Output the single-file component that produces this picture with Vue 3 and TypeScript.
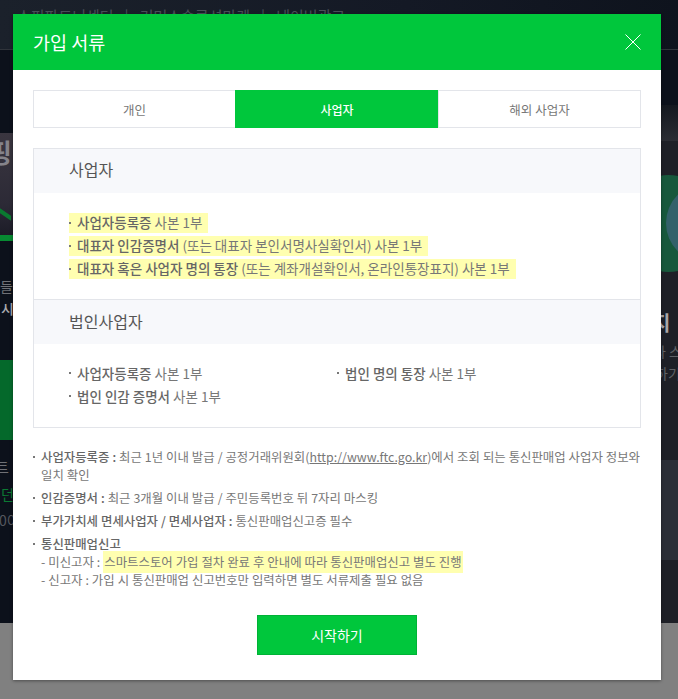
<script setup lang="ts">
const tabs = ['개인', '사업자', '해외 사업자']
const activeTab = 1
const bizDocs = [
  { strong: '사업자등록증', rest: ' 사본 1부' },
  { strong: '대표자 인감증명서', rest: ' (또는 대표자 본인서명사실확인서) 사본 1부' },
  { strong: '대표자 혹은 사업자 명의 통장', rest: ' (또는 계좌개설확인서, 온라인통장표지) 사본 1부' }
]
const corpDocs = [
  { strong: '사업자등록증', rest: ' 사본 1부' },
  { strong: '법인 명의 통장', rest: ' 사본 1부' },
  { strong: '법인 인감 증명서', rest: ' 사본 1부' }
]
</script>

<template>
  <div class="page">
    <div class="backdrop" aria-hidden="true">
      <div class="bg-top">
        <span>쇼핑파트너센터</span><i>|</i><span>커머스솔루션마켓</span><i>|</i><span>네이버광고</span>
      </div>
      <div class="bg-left-hero"></div>
      <span class="bg-txt big">핑</span>
      <div class="bg-tri"></div>
      <div class="bg-gbar"></div>
      <span class="bg-txt l1">밍들</span>
      <span class="bg-txt l2">시</span>
      <div class="bg-gblock"></div>
      <span class="bg-txt l3">트</span>
      <span class="bg-txt l4">던</span>
      <span class="bg-txt l5">0이</span>
      <div class="bg-right-a"></div>
      <div class="bg-right-b"></div>
      <div class="bg-circle c1"></div>
      <div class="bg-circle c2"></div>
      <span class="bg-txt r1">지</span>
      <span class="bg-txt r2">라 스</span>
      <span class="bg-txt r3">하기</span>
      <div class="bg-right-c"></div>
      <div class="bg-grey"></div>
    </div>

    <section class="modal">
      <header class="head">
        <h2>가입 서류</h2>
        <svg class="close" width="16" height="16" viewBox="0 0 16 16" fill="none" stroke="#fff" stroke-width="1">
          <path d="M0.5 0.5 15.5 15.5M15.5 0.5 0.5 15.5" />
        </svg>
      </header>

      <div class="body">
        <nav class="tabs">
          <a v-for="(t, i) in tabs" :key="t" class="tab" :class="{ on: i === activeTab }">{{ t }}</a>
        </nav>

        <div class="box">
          <h3 class="band">사업자</h3>
          <div class="docs first">
            <div v-for="d in bizDocs" :key="d.strong" class="doc-row">
              <span class="doc mark"><b>{{ d.strong }}</b>{{ d.rest }}</span>
            </div>
          </div>
          <h3 class="band ruled">법인사업자</h3>
          <div class="docs grid">
            <span v-for="d in corpDocs" :key="d.strong" class="doc"><b>{{ d.strong }}</b>{{ d.rest }}</span>
          </div>
        </div>

        <ul class="notes">
          <li>
            <span class="one-line"><b>사업자등록증 :</b> 최근 1년 이내 발급 / 공정거래위원회(<u>http://www.ftc.go.kr</u>)에서 조회 되는 통신판매업 사업자 정보와</span><br />일치 확인
          </li>
          <li><b>인감증명서 :</b> 최근 3개월 이내 발급 / 주민등록번호 뒤 7자리 마스킹</li>
          <li><b>부가가치세 면세사업자 / 면세사업자 :</b> 통신판매업신고증 필수</li>
          <li>
            <b>통신판매업신고</b><br />
            - 미신고자 : <span class="mark-note">스마트스토어 가입 절차 완료 후 안내에 따라 통신판매업신고 별도 진행</span><br />
            - 신고자 : 가입 시 통신판매업 신고번호만 입력하면 별도 서류제출 필요 없음
          </li>
        </ul>

        <div class="actions">
          <button class="start" type="button">시작하기</button>
        </div>
      </div>
    </section>
  </div>
</template>

<style>
html,
body {
  margin: 0;
  background: #808080;
}
</style>

<style scoped>
.page {
  position: relative;
  width: 678px;
  height: 699px;
  overflow: hidden;
  font-family: "Noto Sans CJK KR", "Noto Sans", sans-serif;
}
.backdrop {
  position: absolute;
  inset: 0;
  background: #0c111b;
  overflow: hidden;
}
.bg-top {
  position: absolute;
  left: 0;
  right: 0;
  top: 0;
  height: 50px;
  box-sizing: border-box;
  padding: 4px 0 0 17px;
  background: linear-gradient(90deg, #1b212b, #141925 60%, #0e131d);
  border-bottom: 1px solid #30343b;
  color: #4a4f58;
  font-size: 15px;
  line-height: 24px;
  white-space: nowrap;
}
.bg-top i {
  font-style: normal;
  margin: 0 11px;
}
.bg-left-hero {
  position: absolute;
  left: 0;
  top: 133px;
  width: 13px;
  height: 102px;
  background: linear-gradient(180deg, #3a3640, #2c2a36 70%, #1c1c27);
}
.bg-tri {
  position: absolute;
  left: 0;
  top: 212px;
  width: 11px;
  height: 5px;
  background: #0a7a30;
  transform: skewY(35deg);
}
.bg-gbar {
  position: absolute;
  left: 0;
  top: 235px;
  width: 13px;
  height: 6px;
  background: #078a32;
}
.bg-gblock {
  position: absolute;
  left: 0;
  top: 360px;
  width: 13px;
  height: 80px;
  background: #04692b;
}
.bg-txt {
  position: absolute;
  color: #6f7176;
  font-size: 14px;
  line-height: 18px;
  white-space: nowrap;
}
.big {
  left: -12px;
  top: 136px;
  font-size: 26px;
  line-height: 32px;
  font-weight: 700;
  color: #85838a;
}
.l1 { left: -13px; top: 277px; }
.l2 { left: 1px; top: 299px; color: #a9abaf; font-weight: 500; }
.l3 { left: -4px; top: 458px; }
.l4 { left: 1px; top: 485px; color: #0b7a33; }
.l5 { left: -1px; top: 511px; color: #55585f; }
.bg-right-a {
  position: absolute;
  left: 661px;
  top: 105px;
  width: 17px;
  height: 36px;
  background: linear-gradient(180deg, #14181f, #2b2d34);
}
.bg-right-b {
  position: absolute;
  left: 661px;
  top: 141px;
  width: 17px;
  height: 482px;
  background: #1e2027;
}
.bg-circle {
  position: absolute;
  border-radius: 50%;
}
.c1 {
  left: 620px;
  top: 175px;
  width: 97px;
  height: 97px;
  background: #17583c;
}
.c2 {
  left: 666px;
  top: 183px;
  width: 80px;
  height: 80px;
  background: #33616a;
}
.r1 { left: 652px; top: 310px; font-size: 20px; line-height: 26px; font-weight: 700; color: #a9a6a8; }
.r2 { left: 653px; top: 342px; color: #5f6166; }
.r3 { left: 655px; top: 364px; color: #5f6166; }
.bg-right-c {
  position: absolute;
  left: 661px;
  top: 460px;
  width: 17px;
  height: 100px;
  background: #2b2e37;
}
.bg-grey {
  position: absolute;
  left: 0;
  right: 0;
  top: 623px;
  bottom: 0;
  background: #808080;
}

.modal {
  position: absolute;
  left: 13px;
  top: 14px;
  width: 648px;
  background: #fff;
  box-shadow: 0 1px 3px rgba(0, 0, 0, 0.4);
}
.head {
  height: 56px;
  box-sizing: border-box;
  padding: 0 20px;
  display: flex;
  align-items: center;
  justify-content: space-between;
  background: #00c73c;
}
.head h2 {
  margin: 0;
  color: #fff;
  font-size: 18.5px;
  font-weight: 400;
  line-height: 24px;
}
.close {
  display: block;
}
.body {
  padding: 20px 20px 25px;
}
.tabs {
  display: grid;
  grid-template-columns: 202px 203px 203px;
  height: 38px;
}
.tab {
  display: flex;
  align-items: center;
  justify-content: center;
  border: 1px solid #e3e5ea;
  border-right: 0;
  color: #777;
  font-size: 12.5px;
}
.tab:last-child {
  border-right: 1px solid #e3e5ea;
}
.tab.on {
  background: #00c73c;
  border-color: #00c73c;
  color: #fff;
  font-weight: 500;
  font-size: 12px;
}
.box {
  margin-top: 20px;
  border: 1px solid #e3e5ea;
  height: 280px;
  box-sizing: border-box;
}
.band {
  margin: 0;
  height: 44px;
  padding-left: 35px;
  background: #f7f8fb;
  color: #555;
  font-size: 16px;
  font-weight: 400;
  line-height: 41px;
}
.band.ruled {
  border-top: 1px solid #e3e5ea;
  height: 45px;
  box-sizing: border-box;
  line-height: 42px;
}
.docs.first {
  height: 106px;
  box-sizing: border-box;
  padding: 20px 35px 0;
}
.doc-row {
  display: flex;
  height: 23px;
}
.doc {
  position: relative;
  padding-left: 8px;
  color: #777;
  font-size: 13.5px;
  line-height: 20px;
  white-space: nowrap;
}
.doc::before {
  content: "";
  position: absolute;
  left: 0;
  top: 9px;
  width: 2px;
  height: 2px;
  background: #777;
}
.doc b {
  color: #666;
  font-weight: 500;
}
.mark {
  display: block;
  height: 20px;
  line-height: 18px;
  padding-right: 6px;
  background: #ffffb0;
}
.docs.grid {
  display: grid;
  grid-template-columns: 268px 1fr;
  grid-auto-rows: 23px;
  padding: 19px 35px 0;
}
.notes {
  list-style: none;
  margin: 20px 0 0;
  padding: 0;
  color: #777;
  font-size: 12.4px;
  line-height: 18px;
  word-spacing: 0.2px;
}
.notes li {
  position: relative;
  padding-left: 8px;
  margin-bottom: 5px;
}
.one-line {
  white-space: nowrap;
}
.notes li::before {
  content: "";
  position: absolute;
  left: 0;
  top: 8px;
  width: 2px;
  height: 2px;
  background: #777;
}
.notes b {
  color: #666;
  font-weight: 500;
}
.notes u {
  color: #777;
}
.mark-note {
  background: #ffffb0;
  padding: 2px 1px;
}
.actions {
  display: flex;
  justify-content: center;
  margin-top: 26px;
}
.start {
  width: 160px;
  height: 40px;
  padding: 0;
  border: 1px solid #00b236;
  background: #00c73c;
  color: #fff;
  font: inherit;
  font-size: 14px;
  font-weight: 400;
}
</style>
